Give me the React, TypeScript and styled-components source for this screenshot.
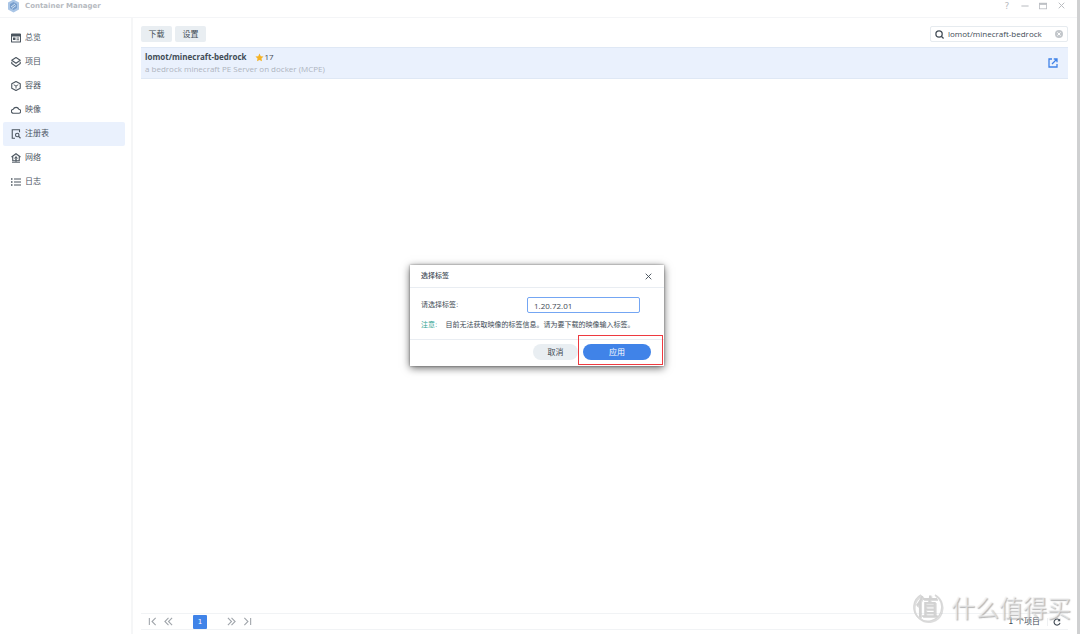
import React, { useState } from "react";
import styled, { createGlobalStyle } from "styled-components";

const GlobalStyle = createGlobalStyle`
  *, *::before, *::after { box-sizing: border-box; }
  body {
    margin: 0;
    background: #fff;
    color: #414b55;
    font-family: "DejaVu Sans", "Noto Sans CJK SC", sans-serif;
    font-size: 8px;
    line-height: 12px;
  }
  button, input { font: inherit; color: inherit; margin: 0; }
  button { border: 0; padding: 0; background: none; cursor: pointer; }
  svg { display: block; flex: none; }
`;

const Window = styled.div`
  position: relative;
  display: flex;
  flex-direction: column;
  min-height: 100vh;
  border-right: 3px solid #cfd0d1;
  overflow: hidden;
`;

const TitleBar = styled.header`
  display: flex;
  align-items: center;
  gap: 5px;
  height: 18px;
  padding: 0 11px 6px 7px;
  border-bottom: 1px solid #f4f5f7;
`;

const Title = styled.h1`
  flex: 1;
  margin: 0;
  font-size: 7px;
  font-weight: 700;
  color: #b6babf;
`;

const WindowControls = styled.div`
  display: flex;
  gap: 8px;
`;

const WindowButton = styled.button`
  display: grid;
  place-items: center;
  width: 10px;
  height: 12px;
  font-size: 9px;
  color: #b8bbc0;
`;

const Body = styled.div`
  display: flex;
  flex: 1;
`;

const Sidebar = styled.nav`
  width: 133px;
  padding: 8px 6px 0 3px;
  border-right: 2px solid #f5f6f7;
`;

const NavList = styled.ul`
  margin: 0;
  padding: 0;
  list-style: none;
`;

const NavLink = styled.a<{ $active?: boolean }>`
  display: flex;
  align-items: center;
  gap: 4px;
  height: 24px;
  padding-left: 8px;
  border-radius: 2px;
  color: #4b555f;
  text-decoration: none;
  background: ${(p) => (p.$active ? "#eaf1fd" : "transparent")};
`;

const Main = styled.main`
  display: flex;
  flex: 1;
  flex-direction: column;
  padding: 8px 9px 4px 8px;
`;

const Toolbar = styled.div`
  display: flex;
  gap: 3px;
  margin-bottom: 5px;
`;

const ToolButton = styled.button`
  width: 31px;
  height: 16px;
  padding-top: 1px;
  border-radius: 2px;
  background: #e9eef2;
`;

const SearchBox = styled.label`
  display: flex;
  align-items: center;
  gap: 4px;
  width: 138px;
  height: 16px;
  margin-left: auto;
  padding: 0 3px 0 4px;
  border: 1px solid #e6ebef;
  border-radius: 2px;
`;

const SearchInput = styled.input`
  flex: 1;
  min-width: 0;
  height: 12px;
  padding: 0;
  border: 0;
  outline: 0;
  background: transparent;
  font-family: "Open Sans", sans-serif;
`;

const ResultList = styled.ul`
  flex: 1;
  margin: 0;
  padding: 0;
  list-style: none;
`;

const Result = styled.li`
  display: flex;
  align-items: center;
  justify-content: space-between;
  height: 32px;
  padding: 0 10px 0 4px;
  border: solid #dfe8f5;
  border-width: 1px 0;
  background: #eaf1fd;
  font-family: "Open Sans", sans-serif;
`;

const ResultHeading = styled.div`
  display: flex;
  align-items: center;
  gap: 1px;
`;

const ResultName = styled.strong`
  margin-right: 7px;
`;

const ResultText = styled.p`
  margin: 0;
  color: #aeb4be;
`;

const IconLink = styled.a`
  color: #4083e8;
`;

const Pager = styled.footer`
  display: flex;
  align-items: center;
  height: 17px;
  padding: 0 7px 0 3px;
  border: solid #f1f3f5;
  border-width: 1px 0;
`;

const PageStep = styled.button`
  display: grid;
  place-items: center;
  width: 16px;
  height: 14px;
  color: #a0a5ab;
`;

const CurrentPage = styled.button`
  width: 14px;
  height: 14px;
  margin: 0 16px 0 17px;
  border-radius: 1px;
  background: #4083e8;
  color: #fff;
  font-size: 7px;
`;

const Total = styled.span`
  margin-left: auto;
  padding-right: 7px;
`;

const Refresh = styled.button`
  padding-left: 5px;
  border-left: 1px solid #eef0f2;
`;

const Overlay = styled.div`
  position: absolute;
  inset: 0;
  display: flex;
  align-items: center;
  justify-content: center;
  padding: 0 3px 3px 0;
`;

const Dialog = styled.section`
  width: 254px;
  background: #fff;
  box-shadow: 0 2px 8px rgba(0, 0, 0, 0.6), 0 0 2px rgba(0, 0, 0, 0.4);
  font-size: 7px;
`;

const DialogHeader = styled.header`
  display: flex;
  align-items: center;
  justify-content: space-between;
  height: 23px;
  padding: 0 12px 0 11px;
  border-bottom: 1px solid #e9edf2;
`;

const DialogTitle = styled.h2`
  margin: 0;
  font-size: 7px;
  font-weight: 500;
`;

const DialogBody = styled.div`
  padding: 9px 11px 8px;
`;

const Field = styled.div`
  display: flex;
  align-items: center;
  justify-content: space-between;
  padding-right: 13px;
`;

const TagInput = styled.input`
  width: 113px;
  height: 16px;
  padding: 0 6px;
  border: 1px solid #74a6f3;
  border-radius: 2px;
  outline: 0;
  font-family: "Open Sans", sans-serif;
  font-size: 8px;
`;

const Note = styled.p`
  margin: 6px 0 0;
  white-space: nowrap;
`;

const NoteLabel = styled.span`
  margin-right: 6px;
  color: #2fa392;
`;

const DialogFooter = styled.footer`
  display: flex;
  justify-content: flex-end;
  gap: 5px;
  padding: 4px 13px 6px;
  border-top: 1px solid #e9edf2;
`;

const PillButton = styled.button<{ $primary?: boolean }>`
  width: ${(p) => (p.$primary ? "68px" : "45px")};
  height: 16px;
  padding-top: 1px;
  border-radius: 8px;
  background: ${(p) => (p.$primary ? "#4083e8" : "#e9eef2")};
  color: ${(p) => (p.$primary ? "#fff" : "#414b55")};
  font-size: 8px;
`;

const Highlighted = styled.div`
  position: relative;
  display: flex;

  &::after {
    content: "";
    position: absolute;
    inset: -9px -12px -5px -5px;
    border: 1px solid #ee3a40;
    pointer-events: none;
  }
`;

const Watermark = styled.div`
  position: absolute;
  right: 6px;
  bottom: 12px;
  display: flex;
  align-items: center;
  gap: 8px;
  color: rgba(240, 240, 240, 0.6);
  font-family: "Noto Sans CJK SC", sans-serif;
  font-size: 24px;
  line-height: 30px;
  text-shadow: 1px 1px 1px rgba(150, 150, 150, 0.7);
  pointer-events: none;
`;

const WatermarkSeal = styled.svg`
  overflow: visible;
  text-shadow: none;
  filter: drop-shadow(1px 1px 0 rgba(170, 170, 170, 0.4));
`;

type IconProps = { size?: number; stroke?: number; children: React.ReactNode };

const Icon = ({ size = 10, stroke = 2.2, children }: IconProps) => (
  <svg width={size} height={size} viewBox="0 0 20 20" fill="none" stroke="currentColor" strokeWidth={stroke} aria-hidden="true">
    {children}
  </svg>
);

const navItems = [
  {
    label: "总览",
    icon: (
      <>
        <rect x="1" y="2" width="18" height="16" rx="1" />
        <path d="M1 4.5h18" strokeWidth="5" />
        <path d="M4 9h5v5H4z" fill="currentColor" stroke="none" />
        <path d="M11 10h5M11 13.500h5" strokeWidth="1.800" />
      </>
    ),
  },
  {
    label: "项目",
    icon: (
      <>
        <path d="M10 1 18.500 6.500 10 12.500 1.500 6.500Z" strokeLinejoin="round" />
        <path d="M1.500 9.500v3.500L10 19l8.500-6V9.500" strokeLinejoin="round" />
      </>
    ),
  },
  {
    label: "容器",
    icon: (
      <>
        <path d="M10 1 18.500 5.500v9L10 19l-8.500-4.500v-9Z" strokeLinejoin="round" />
        <path d="m5.500 7.500 4.500 2.500 4.500-2.500M10 10v5" strokeWidth="1.800" />
      </>
    ),
  },
  {
    label: "映像",
    icon: <path d="M5 16.500a4 4 0 0 1-.5-8 6 6 0 0 1 11.200 0A4 4 0 0 1 15 16.500Z" strokeLinejoin="round" />,
  },
  {
    label: "注册表",
    active: true,
    icon: (
      <>
        <path d="M17 6.500V1.500H2.500v17H8" />
        <circle cx="12.500" cy="12" r="3.500" />
        <path d="m15 14.500 4 4" />
      </>
    ),
  },
  {
    label: "网络",
    icon: (
      <>
        <path d="M1 8 10 1.500 19 8M3.500 7v8.500h13V7" />
        <path d="M10 5.500v3M8 9h4v3H8zM10 12v6M2 18.500h16" strokeWidth="1.800" />
      </>
    ),
  },
  {
    label: "日志",
    icon: (
      <>
        <path d="M0 4h3M0 10h3M0 16h3" strokeWidth="2.600" />
        <path d="M6 4h14M6 10h14M6 16h14" strokeWidth="2.200" />
      </>
    ),
  },
];

const AppLogo = () => (
  <svg width="13" height="14" viewBox="0 0 24 28" aria-hidden="true">
    <path d="M12 1 23 7v14l-11 6L1 21V7Z" fill="#a9c5e6" />
    <path d="M12 6 19 10v8l-7 4-7-4v-8Z" fill="#799fce" />
    <path d="m7 16 8-6M9 19l8-6" stroke="#cfe0f2" strokeWidth="2" />
  </svg>
);

export default function App() {
  const [query, setQuery] = useState("lomot/minecraft-bedrock");
  const [tag, setTag] = useState("1.20.72.01");

  return (
    <>
      <GlobalStyle />
      <Window>
        <TitleBar>
          <AppLogo />
          <Title>Container Manager</Title>
          <WindowControls>
            <WindowButton aria-label="帮助">?</WindowButton>
            <WindowButton aria-label="最小化">
              <Icon size={8}><path d="M1 10h18" strokeWidth="2.500" /></Icon>
            </WindowButton>
            <WindowButton aria-label="最大化">
              <Icon size={8}>
                <rect x="1" y="3" width="18" height="14" strokeWidth="2" />
                <path d="M1 5h18" strokeWidth="4" />
              </Icon>
            </WindowButton>
            <WindowButton aria-label="关闭">
              <Icon size={7} stroke={2.8}><path d="m2 2 16 16M18 2 2 18" /></Icon>
            </WindowButton>
          </WindowControls>
        </TitleBar>

        <Body>
          <Sidebar>
            <NavList>
              {navItems.map((item) => (
                <li key={item.label}>
                  <NavLink href="#" $active={item.active}>
                    <Icon>{item.icon}</Icon>
                    {item.label}
                  </NavLink>
                </li>
              ))}
            </NavList>
          </Sidebar>

          <Main>
            <Toolbar>
              <ToolButton>下载</ToolButton>
              <ToolButton>设置</ToolButton>
              <SearchBox>
                <Icon size={9} stroke={2.8}>
                  <circle cx="9" cy="9" r="7" />
                  <path d="m14 14 5 5" />
                </Icon>
                <SearchInput aria-label="搜索" value={query} onChange={(e) => setQuery(e.target.value)} />
                <WindowButton aria-label="清除" onClick={() => setQuery("")}>
                  <Icon size={8}>
                    <circle cx="10" cy="10" r="10" fill="#c3c7cb" stroke="none" />
                    <path d="m6 6 8 8M14 6l-8 8" stroke="#fff" strokeWidth="2.500" />
                  </Icon>
                </WindowButton>
              </SearchBox>
            </Toolbar>

            <ResultList>
              <Result>
                <div>
                  <ResultHeading>
                    <ResultName>lomot/minecraft-bedrock</ResultName>
                    <Icon size={9}>
                      <path d="m10 1 2.800 6 6.200.7-4.600 4.400 1.200 6.400L10 15.400l-5.600 3.100 1.200-6.400L1 7.700 7.200 7Z" fill="#f5b325" stroke="none" />
                    </Icon>
                    17
                  </ResultHeading>
                  <ResultText>a bedrock minecraft PE Server on docker (MCPE)</ResultText>
                </div>
                <IconLink href="#" aria-label="打开">
                  <Icon stroke={2.6}>
                    <path d="M8 2H2v16h16v-6M11.500 2H18v6.500M18 2 8 12" />
                  </Icon>
                </IconLink>
              </Result>
            </ResultList>

            <Pager>
              <PageStep aria-label="首页">
                <Icon size={9} stroke={2.4}><path d="M3 2v16M17 2 9 10l8 8" /></Icon>
              </PageStep>
              <PageStep aria-label="上一页">
                <Icon size={9} stroke={2.4}><path d="m10 2-8 8 8 8M18 2l-8 8 8 8" /></Icon>
              </PageStep>
              <CurrentPage aria-current="page">1</CurrentPage>
              <PageStep aria-label="下一页">
                <Icon size={9} stroke={2.4}><path d="m2 2 8 8-8 8M10 2l8 8-8 8" /></Icon>
              </PageStep>
              <PageStep aria-label="末页">
                <Icon size={9} stroke={2.4}><path d="m3 2 8 8-8 8M17 2v16" /></Icon>
              </PageStep>
              <Total>1 个项目</Total>
              <Refresh aria-label="刷新">
                <Icon size={8} stroke={2.8}>
                  <path d="M16.500 6A7.500 7.500 0 1 0 17.500 12" />
                  <path d="M18 1v7h-7Z" fill="currentColor" stroke="none" />
                </Icon>
              </Refresh>
            </Pager>
          </Main>
        </Body>

        <Overlay>
          <Dialog role="dialog" aria-labelledby="dialog-title">
            <DialogHeader>
              <DialogTitle id="dialog-title">选择标签</DialogTitle>
              <button aria-label="关闭">
                <Icon size={7} stroke={2.6}><path d="m2 2 16 16M18 2 2 18" /></Icon>
              </button>
            </DialogHeader>
            <DialogBody>
              <Field>
                <label htmlFor="tag">请选择标签:</label>
                <TagInput id="tag" value={tag} onChange={(e) => setTag(e.target.value)} />
              </Field>
              <Note>
                <NoteLabel>注意:</NoteLabel> 目前无法获取映像的标签信息。请为要下载的映像输入标签。
              </Note>
            </DialogBody>
            <DialogFooter>
              <PillButton>取消</PillButton>
              <Highlighted>
                <PillButton $primary>应用</PillButton>
              </Highlighted>
            </DialogFooter>
          </Dialog>
        </Overlay>

        <Watermark aria-hidden="true">
          <WatermarkSeal width="30" height="30" viewBox="0 0 30 30">
            <path d="M8 3a14 14 0 1 0 20 17M22 3a14 14 0 0 1 6 17" fill="none" stroke="#d8d8d8" strokeWidth="1.500" />
            <text x="14" y="23" fontSize="23" fontWeight="500" textAnchor="middle" fill="#d2d2d2">值</text>
          </WatermarkSeal>
          什么值得买
        </Watermark>
      </Window>
    </>
  );
}
